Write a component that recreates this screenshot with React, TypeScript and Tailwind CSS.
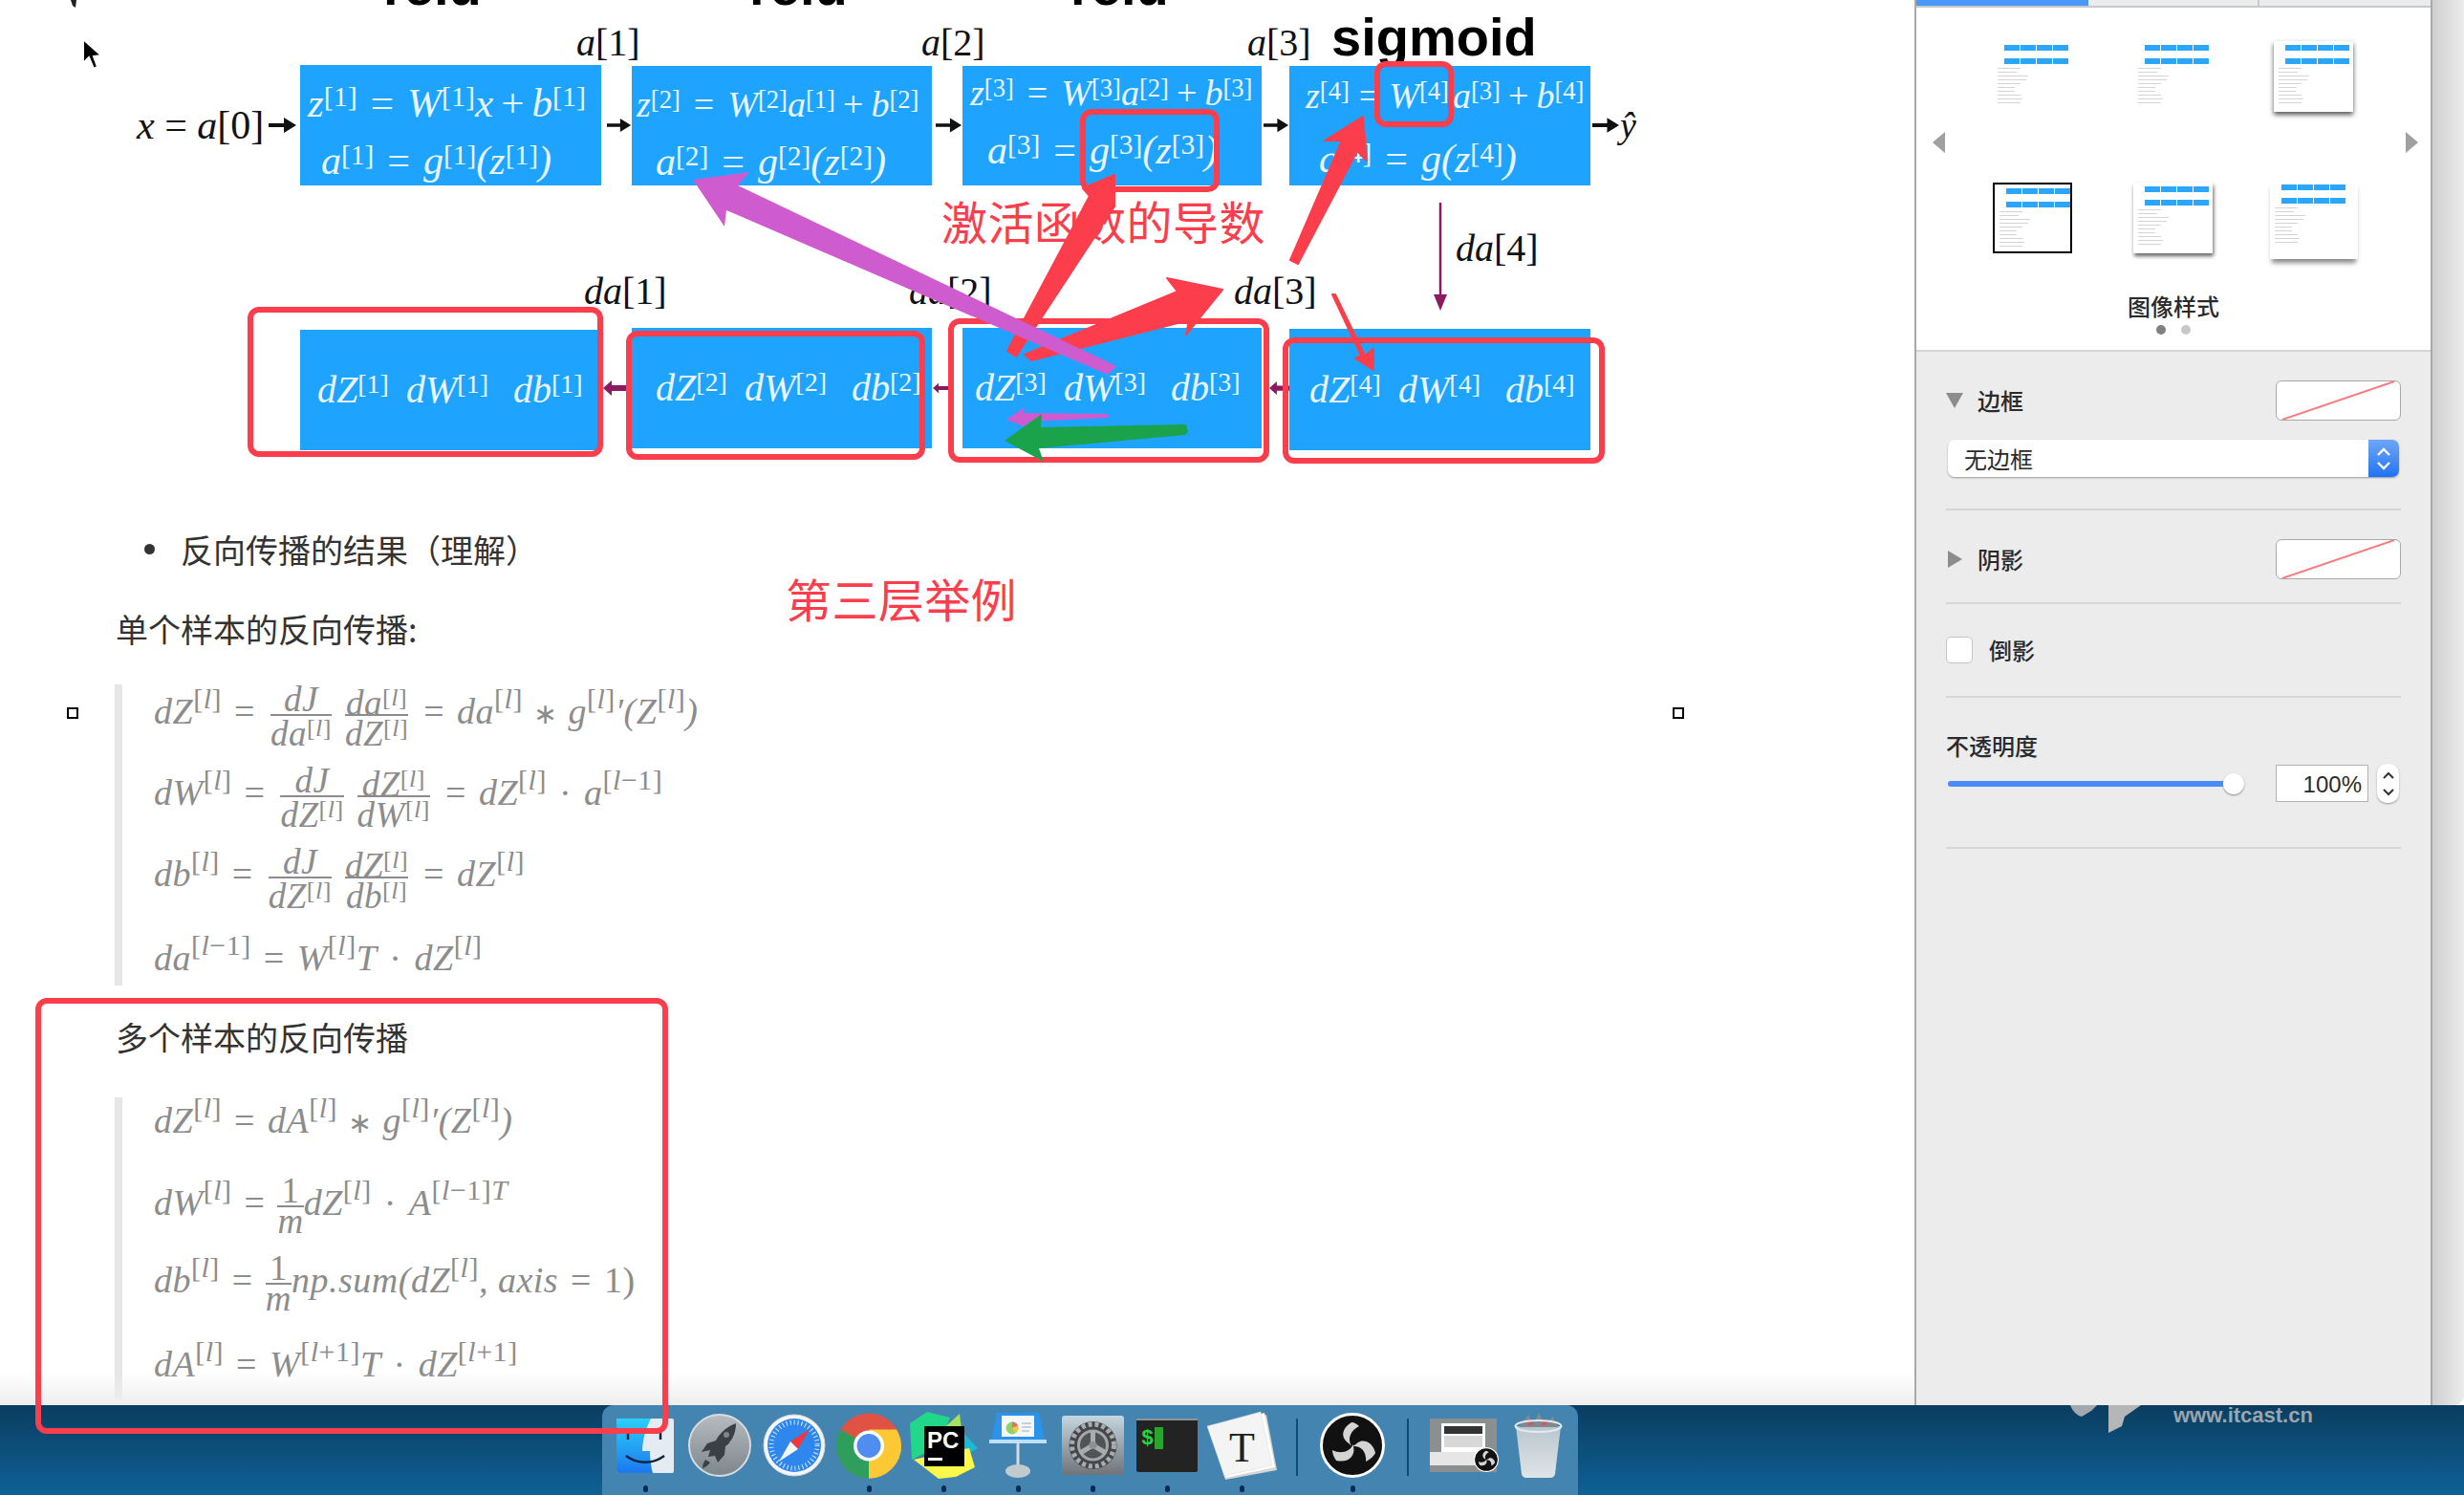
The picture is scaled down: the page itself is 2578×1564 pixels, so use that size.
import type { ReactNode } from "react";

const serif = "font-['Liberation_Serif',serif]";
const cjk = "font-['Noto_Sans_CJK_SC','Noto_Sans',sans-serif]";

function BoxSup({ children }: { children: ReactNode }) {
  return <span className="align-[0.35em] text-[0.7em] leading-none not-italic">[{children}]</span>;
}

function Op({ children, wide }: { children: ReactNode; wide?: boolean }) {
  return <span className={wide ? "mx-[14px] not-italic" : "mx-[8px] not-italic"}>{children}</span>;
}

function BlueBox({ className, children }: { className: string; children: ReactNode }) {
  return (
    <div className={`bg-[#1ea4ff] text-[#eaf6ff] italic text-[38px] leading-[40px] whitespace-nowrap shrink-0 ${serif} ${className}`}>
      {children}
    </div>
  );
}

function BlackArrow({ className }: { className: string }) {
  return (
    <svg viewBox="0 0 30 18" className={`h-[18px] shrink-0 ${className}`}>
      <path d="M0 7h16V1l13 8-13 8v-6H0z" fill="#111" />
    </svg>
  );
}

function PurpleLeft({ className }: { className: string }) {
  return (
    <svg viewBox="0 0 24 16" className={`h-[16px] shrink-0 ${className}`}>
      <path d="M0 8 9 0v5h15v6H9v5z" fill="#8b1a62" />
    </svg>
  );
}

function Trio({ n }: { n: number }) {
  return (
    <div className="flex items-baseline text-[40px]">
      <span className="w-[93px]">dZ<BoxSup>{n}</BoxSup></span>
      <span className="w-[112px]">dW<BoxSup>{n}</BoxSup></span>
      <span>db<BoxSup>{n}</BoxSup></span>
    </div>
  );
}

function Lab({ className, children }: { className: string; children: ReactNode }) {
  return <div className={`absolute text-[40px] leading-none text-[#111] whitespace-nowrap ${serif} ${className}`}>{children}</div>;
}

function Head({ className, children }: { className: string; children: ReactNode }) {
  return (
    <div className={`absolute text-[56px] leading-none font-bold text-black font-['Liberation_Sans',sans-serif] ${className}`}>
      {children}
    </div>
  );
}

function L() {
  return <span className="align-[16px] text-[30px] leading-none not-italic">[<i>l</i>]</span>;
}

function Sp({ children }: { children: ReactNode }) {
  return <span className="align-[16px] text-[30px] leading-none not-italic">[{children}]</span>;
}

function Frac({ num, den, className }: { num: ReactNode; den: ReactNode; className: string }) {
  return (
    <span className={`inline-flex flex-col items-center align-middle text-[37px] leading-[30px] ${className}`}>
      <span className="h-[30px] whitespace-nowrap">{num}</span>
      <span className="h-[2px] w-full bg-[#8c8c8c]" />
      <span className="h-[30px] whitespace-nowrap">{den}</span>
    </span>
  );
}

function SmallL() {
  return <span className="align-[10px] text-[26px] leading-none not-italic">[<i>l</i>]</span>;
}

function Eq({ children }: { children: ReactNode }) {
  return <div className="flex h-[85px] items-center whitespace-nowrap"><span>{children}</span></div>;
}

function Quote({ className, inner, children }: { className: string; inner: string; children: ReactNode }) {
  return (
    <div className={`flow-root ml-[120px] border-l-[8px] border-[#e6e6e6] pl-[33px] text-[#8c8c8c] italic text-[38px] tracking-[0.5px] ${serif} ${className}`}>
      <div className={inner}>{children}</div>
    </div>
  );
}

const eqOp = "mx-[13px] not-italic";
const star = "mx-[11px] text-[30px] not-italic";

function Handle({ className }: { className: string }) {
  return <div className={`absolute h-[12px] w-[12px] border-2 border-black bg-white ${className}`} />;
}

const thumbLines = ["w-[24px]", "w-[20px]", "w-[32px]", "w-[30px]", "w-[24px]", "w-[18px]", "w-[18px]", "w-[24px]", "w-[26px]", "w-[24px]"];

function Thumb({ className }: { className: string }) {
  return (
    <div className={`flex h-[74px] w-[83px] flex-col bg-white ${className}`}>
      <div className="ml-[12px] mt-[4px] flex gap-[1px]">
        {[0, 1, 2, 3].map((i) => <div key={i} className="h-[6px] w-[16px] bg-[#2ba6fb]" />)}
      </div>
      <div className="ml-[12px] mt-[8px] flex gap-[1px]">
        {[0, 1, 2, 3].map((i) => <div key={i} className="h-[6px] w-[16px] bg-[#2ba6fb]" />)}
      </div>
      <div className="ml-[5px] mt-[4px] flex flex-col gap-[3px]">
        {thumbLines.map((w, i) => <div key={i} className={`h-[1px] bg-[#d4d4d4] ${w}`} />)}
      </div>
    </div>
  );
}

function NoneSwatch() {
  return (
    <div className="h-[42px] w-[131px] overflow-hidden rounded-[6px] border border-[#a8a8a8] bg-white">
      <svg viewBox="0 0 131 42" className="h-full w-full">
        <line x1="4" y1="42" x2="127" y2="0" stroke="#fb7a80" strokeWidth="2" />
      </svg>
    </div>
  );
}

function Divider({ className }: { className: string }) {
  return <div className={`mx-[31px] h-[2px] bg-[#d6d6d6] ${className}`} />;
}

function DockSlot({ dot, children }: { dot?: boolean; children: ReactNode }) {
  return (
    <div className="flex h-full w-[78px] flex-col items-center">
      <div className="flex h-[84px] items-center justify-center">{children}</div>
      <div className={`h-[7px] w-[5px] rounded-full ${dot ? "bg-[#0a2a55]" : "bg-transparent"}`} />
    </div>
  );
}

function DockSep() {
  return (
    <div className="flex h-full w-[38px] items-center justify-center pb-[6px]">
      <div className="h-[60px] w-[2px] bg-[#0f4b78]" />
    </div>
  );
}

function Finder() {
  return (
    <svg viewBox="0 0 60 57" className="h-[57px] w-[60px]">
      <defs>
        <linearGradient id="fb" x1="0" y1="0" x2="0" y2="1"><stop offset="0" stopColor="#2bd0fa" /><stop offset="1" stopColor="#1c78ee" /></linearGradient>
      </defs>
      <rect width="60" height="57" rx="2" fill="#e4ebf3" />
      <path d="M2 0h34c-6 12-9 24-9 34h8c0 8 1 16 3 23H2a2 2 0 0 1-2-2V2a2 2 0 0 1 2-2z" fill="url(#fb)" />
      <path d="M12 13v9M46 13v9" stroke="#10233f" strokeWidth="2.5" />
      <path d="M10 39c12 9 28 9 40 0" stroke="#10233f" strokeWidth="2.5" fill="none" />
    </svg>
  );
}

function Rocket() {
  return (
    <svg viewBox="0 0 66 66" className="h-[66px] w-[66px]">
      <defs>
        <linearGradient id="rk" x1="0" y1="0" x2="0" y2="1"><stop offset="0" stopColor="#b6bcc0" /><stop offset="1" stopColor="#7d868b" /></linearGradient>
      </defs>
      <circle cx="33" cy="33" r="32" fill="url(#rk)" stroke="#d9dcde" strokeWidth="2" />
      <path d="M50 10c-9 3-17 10-21 18l-9 3-6 9 9-2-2 7 7-1 3 7 7-8 1-9c7-5 11-14 11-24z" fill="#3b4046" />
      <path d="M18 48c-2 3-3 6-3 9 3-1 6-3 8-6z" fill="#3b4046" />
      <circle cx="40" cy="22" r="3" fill="#7d868b" />
    </svg>
  );
}

function Safari() {
  return (
    <svg viewBox="0 0 66 66" className="h-[66px] w-[66px]">
      <circle cx="33" cy="33" r="32" fill="#f4f6f8" stroke="#d4d7da" />
      <circle cx="33" cy="33" r="28" fill="#2f86ec" />
      <circle cx="33" cy="33" r="24" fill="none" stroke="#d8ebff" strokeWidth="5" strokeDasharray="1 3" />
      <path d="M49 16 29 29l8 8z" fill="#f0383c" />
      <path d="M17 50 37 37l-8-8z" fill="#f4f6f8" />
    </svg>
  );
}

function Chrome() {
  return (
    <svg viewBox="0 0 68 68" className="h-[69px] w-[68px]">
      <circle cx="34" cy="34" r="34" fill="#e05243" />
      <path d="M34 34 4.5 17A34 34 0 0 0 34 68z" fill="#2f9d5b" />
      <path d="M34 34h34a34 34 0 0 1-34 34z" fill="#fcc934" />
      <path d="M34 17h29a34 34 0 0 1 5 17 34 34 0 0 1-34 34l16-28z" fill="#fcc934" />
      <circle cx="34" cy="34" r="16" fill="#fff" />
      <circle cx="34" cy="34" r="12.5" fill="#4f8df0" />
    </svg>
  );
}

function PyCharm() {
  return (
    <svg viewBox="0 0 71 70" className="h-[70px] w-[71px]">
      <path d="M18 0 42 6 30 36 2 50 0 12z" fill="#21d789" />
      <path d="M52 2 56 34 30 22z" fill="#a8e05f" />
      <path d="M56 22 71 38 58 46z" fill="#1bb9d8" />
      <path d="M4 50 30 70 48 68 68 58 62 38 30 44z" fill="#fcf84a" />
      <rect x="15" y="15" width="42" height="42" fill="#000" />
      <text x="18" y="38" fontSize="24" fontWeight="700" fill="#fff" fontFamily="Liberation Sans, sans-serif">PC</text>
      <rect x="19" y="48" width="15" height="3" fill="#fff" />
    </svg>
  );
}

function Keynote() {
  return (
    <svg viewBox="0 0 60 68" className="h-[68px] w-[60px]">
      <path d="M8 0h44l6 28H2z" fill="#2b93ea" />
      <rect x="13" y="3" width="34" height="22" fill="#f5f8fb" />
      <circle cx="24" cy="16" r="6.5" fill="#8fd26a" />
      <path d="M24 16V9.5a6.5 6.5 0 0 1 6 4z" fill="#ef6a6a" />
      <path d="M24 16l6-2.5a6.5 6.5 0 0 1-3 8z" fill="#f3c64b" />
      <path d="M34 11h10M34 15h10M34 19h8" stroke="#b9c4cf" strokeWidth="1.5" />
      <rect y="28" width="60" height="4" fill="#bfe0fb" />
      <rect x="28.5" y="32" width="3" height="26" fill="#d6dbe0" />
      <ellipse cx="30" cy="61" rx="13" ry="7" fill="#c2c9cf" />
    </svg>
  );
}

function SysPrefs() {
  return (
    <svg viewBox="0 0 65 62" className="h-[62px] w-[65px]">
      <defs>
        <linearGradient id="sp" x1="0" y1="0" x2="0" y2="1"><stop offset="0" stopColor="#c4d6df" /><stop offset="1" stopColor="#6f7479" /></linearGradient>
      </defs>
      <rect width="65" height="62" rx="3" fill="url(#sp)" />
      <circle cx="32.5" cy="31" r="25" fill="#45484b" />
      <circle cx="32.5" cy="31" r="22" fill="none" stroke="#a9adb0" strokeWidth="5" strokeDasharray="4 3" />
      <circle cx="32.5" cy="31" r="15" fill="#505457" stroke="#a3a7aa" strokeWidth="3" />
      <path d="M32.5 31V16M32.5 31 19 39M32.5 31 46 39" stroke="#a9adb0" strokeWidth="5" />
      <circle cx="32.5" cy="31" r="4" fill="#8d9194" />
    </svg>
  );
}

function TerminalIcon() {
  return (
    <svg viewBox="0 0 64 56" className="h-[56px] w-[64px]">
      <rect width="64" height="56" rx="2" fill="#232323" />
      <rect width="64" height="2" fill="#8e9498" />
      <text x="5" y="27" fontSize="22" fontWeight="700" fill="#27d43f" fontFamily="Liberation Mono, monospace">$</text>
      <rect x="19" y="9" width="9" height="23" fill="#2ba32f" />
    </svg>
  );
}

function Typora() {
  return (
    <svg viewBox="0 0 73 72" className="h-[72px] w-[73px]">
      <path d="M4 22 62 4l11 58-54 10z" fill="#d6d6d6" />
      <path d="M2 19 60 2l11 57-52 11z" fill="#fff" />
      <path d="M0 16 56 1l12 56-50 11z" fill="#f4f4f4" stroke="#ddd" strokeWidth="0.5" />
      <text x="23" y="53" fontSize="44" fill="#222" fontFamily="Liberation Serif, serif">T</text>
    </svg>
  );
}

function Obs({ size }: { size: string }) {
  return (
    <svg viewBox="0 0 68 68" className={size}>
      <circle cx="34" cy="34" r="32.5" fill="#111" stroke="#fff" strokeWidth="3" />
      <path d="M33 10c-8 5-11 12-7 18 2 3 5 4 7 7-5-9 0-17 8-21-2-2-5-4-8-4z" fill="#d4d4d4" />
      <path d="M58 42c-2-9-9-14-16-12-3 1-5 4-8 5 10-1 15 7 14 16 4-2 8-5 10-9z" fill="#d4d4d4" />
      <path d="M17 50c9 2 16-1 18-8 1-3 0-6 0-9-5 9-14 10-22 6 0 4 2 8 4 11z" fill="#d4d4d4" />
    </svg>
  );
}

function PreviewWindow() {
  return (
    <div className="relative h-[56px] w-[70px] bg-[#8b8f92]">
      <div className="mx-[12px] mt-[5px] h-[30px] bg-white p-[3px]">
        <div className="h-[8px] bg-[#333]" />
        <div className="mt-[2px] h-[12px] bg-[#d8d8d8]" />
      </div>
      <div className="h-[14px] bg-[#e6e6e6]" />
      <div className="absolute -bottom-[2px] -right-[2px]"><Obs size="h-[30px] w-[26px]" /></div>
    </div>
  );
}

function Trash() {
  return (
    <svg viewBox="0 0 53 68" className="h-[68px] w-[53px]">
      <defs>
        <linearGradient id="tr" x1="0" y1="0" x2="0" y2="1"><stop offset="0" stopColor="#b9c6ce" /><stop offset="1" stopColor="#dfe5e8" /></linearGradient>
      </defs>
      <path d="M3 14 9 64q1 4 5 4h25q4 0 5-4l6-50z" fill="url(#tr)" />
      <path d="M6 15 16 2l5 10 6-12 6 12 9-8 5 11z" fill="#7f8b93" />
      <path d="M14 13l5-6 2 6zM29 13l4-7 3 7z" fill="#d05a5a" />
      <ellipse cx="26.5" cy="14" rx="24" ry="6" fill="none" stroke="#e6eaec" strokeWidth="2" />
    </svg>
  );
}

function Overlay() {
  const red = "#fc3d4c";
  const boxes = [
    [259, 321, 372, 157],
    [655, 346, 313, 135],
    [992, 333, 336, 151],
    [1342, 353, 337, 132],
    [1130, 114, 146, 87],
    [1438, 64, 83, 69],
    [37, 1044, 662, 456],
  ];
  return (
    <svg viewBox="0 0 2578 1564" className="pointer-events-none absolute inset-0 h-full w-full">
      <path d="M1507 212V312" stroke="#8b1a62" strokeWidth="2.5" />
      <path d="M1500 308h14l-7 17z" fill="#8b1a62" />
      {boxes.map(([x, y, w, h], i) => (
        <rect key={i} x={x + 3} y={y + 3} width={w - 6} height={h - 6} rx="9" fill="none" stroke={red} strokeWidth="6" />
      ))}
      <g fill={red} stroke={red} strokeWidth="2" strokeLinejoin="round">
        <polygon points="1054,367 1140,205 1133,197 1166,183 1166,216 1063,373" />
        <polygon points="1350,272 1404,147 1386,147 1426,122 1430,168 1420,158 1358,276" />
        <polygon points="1072,371 1232,305 1221,291 1279,303 1241,350 1244,335 1079,377" />
        <polygon points="1394,308 1397,308 1428,372 1437,365 1437,387 1418,375 1424,372" />
      </g>
      <polygon points="725,188 784,180 772,194 1168,383 1159,392 760,220 758,237" fill="#cf5ccf" />
      <polygon points="1053,439 1072,426 1070,432 1159,433 1159,437 1076,441 1076,448" fill="#cf5ccf" />
      <polygon points="1051,461 1090,433 1089,447 1241,444 1243,452 1240,455 1087,469 1092,483" fill="#1aa34a" />
      <polygon points="87,41 87,66 93,60 98,72 102,70 98,59 106,58" fill="#000" stroke="#fff" strokeWidth="2" />
      <polygon points="74,0 80,0 79,8 76,6" fill="#222" />
    </svg>
  );
}

export default function App() {
  return (
    <div className={`relative flex h-[1564px] w-[2578px] flex-col overflow-hidden bg-white ${cjk}`}>
      <div className="flex h-[1470px] shrink-0">
        <div className="relative w-[2003px] shrink-0 overflow-hidden bg-white">
          <Head className="left-[401px] -top-[42px]">relu</Head>
          <Head className="left-[784px] -top-[42px]">relu</Head>
          <Head className="left-[1120px] -top-[42px]">relu</Head>
          <Head className="left-[1393px] top-[11px]">sigmoid</Head>
          <Lab className="left-[603px] top-[25px]"><i>a</i>[1]</Lab>
          <Lab className="left-[964px] top-[25px]"><i>a</i>[2]</Lab>
          <Lab className="left-[1305px] top-[25px]"><i>a</i>[3]</Lab>
          <Lab className="left-[611px] top-[285px]"><i>da</i>[1]</Lab>
          <Lab className="left-[951px] top-[285px]"><i>da</i>[2]</Lab>
          <Lab className="left-[1291px] top-[285px]"><i>da</i>[3]</Lab>
          <Lab className="left-[1523px] top-[240px]"><i>da</i>[4]</Lab>

          <div className="flex items-center pl-[143px] pt-[68px]">
            <div className={`w-[138px] shrink-0 whitespace-nowrap text-[42px] text-[#111] ${serif}`}><i>x</i> = <i>a</i>[0]</div>
            <div className="flex w-[33px] shrink-0"><BlackArrow className="w-[30px]" /></div>
            <BlueBox className="h-[126px] w-[315px] pl-[8px] pt-[18px]">
              <div className="text-[43px]">z<BoxSup>1</BoxSup><Op wide>=</Op>W<BoxSup>1</BoxSup>x<Op>+</Op>b<BoxSup>1</BoxSup></div>
              <div className="ml-[14px] mt-[20px] text-[42px]">a<BoxSup>1</BoxSup><Op wide>=</Op>g<BoxSup>1</BoxSup>(z<BoxSup>1</BoxSup>)</div>
            </BlueBox>
            <div className="flex w-[32px] shrink-0 pl-[6px]"><BlackArrow className="w-[26px]" /></div>
            <BlueBox className="h-[125px] w-[314px] pl-[5px] pt-[20px]">
              <div>z<BoxSup>2</BoxSup><Op wide>=</Op>W<BoxSup>2</BoxSup>a<BoxSup>1</BoxSup><Op>+</Op>b<BoxSup>2</BoxSup></div>
              <div className="ml-[20px] mt-[20px] text-[42px]">a<BoxSup>2</BoxSup><Op wide>=</Op>g<BoxSup>2</BoxSup>(z<BoxSup>2</BoxSup>)</div>
            </BlueBox>
            <div className="flex w-[32px] shrink-0 pl-[4px]"><BlackArrow className="w-[28px]" /></div>
            <BlueBox className="h-[125px] w-[313px] pl-[8px] pt-[8px]">
              <div>z<BoxSup>3</BoxSup><Op wide>=</Op>W<BoxSup>3</BoxSup>a<BoxSup>2</BoxSup><Op>+</Op>b<BoxSup>3</BoxSup></div>
              <div className="ml-[18px] mt-[20px] text-[42px]">a<BoxSup>3</BoxSup><Op wide>=</Op>g<BoxSup>3</BoxSup>(z<BoxSup>3</BoxSup>)</div>
            </BlueBox>
            <div className="flex w-[29px] shrink-0 pl-[2px]"><BlackArrow className="w-[27px]" /></div>
            <BlueBox className="h-[125px] w-[315px] pl-[17px] pt-[11px]">
              <div>z<BoxSup>4</BoxSup><span className="mx-[10px] not-italic">=</span>W<BoxSup>4</BoxSup><span className="ml-[4px]">a</span><BoxSup>3</BoxSup><Op>+</Op>b<BoxSup>4</BoxSup></div>
              <div className="ml-[14px] mt-[26px] text-[42px]">a<BoxSup>4</BoxSup><Op wide>=</Op>g(z<BoxSup>4</BoxSup>)</div>
            </BlueBox>
            <div className="ml-[2px] flex shrink-0 items-center"><BlackArrow className="w-[29px]" /><span className={`text-[38px] italic text-[#111] ${serif}`}>ŷ</span></div>
          </div>

          <div className="relative flex items-start pl-[314px] pt-[149px]">
            <BlueBox className="mt-[2px] flex h-[126px] w-[311px] items-center pl-[18px]"><Trio n={1} /></BlueBox>
            <div className="flex h-[126px] w-[36px] shrink-0 items-center pl-[6px]"><PurpleLeft className="w-[24px]" /></div>
            <BlueBox className="flex h-[126px] w-[314px] items-center pl-[25px]"><Trio n={2} /></BlueBox>
            <div className="flex h-[126px] w-[32px] shrink-0 items-center pl-[1px]"><PurpleLeft className="w-[16px]" /></div>
            <BlueBox className="flex h-[126px] w-[313px] items-center pl-[13px]"><Trio n={3} /></BlueBox>
            <div className="flex h-[126px] w-[29px] shrink-0 items-center pl-[8px]"><PurpleLeft className="w-[21px]" /></div>
            <BlueBox className="mt-[1px] flex h-[127px] w-[315px] items-center pl-[21px]"><Trio n={4} /></BlueBox>
          </div>

          <div className="absolute left-[985px] top-[202px] text-[48px] leading-[56px] tracking-[0.4px] text-[#fc3d4c] whitespace-nowrap">激活函数的导数</div>
          <div className="absolute left-[822px] top-[597px] text-[48px] leading-[56px] tracking-[0.4px] text-[#fc3d4c] whitespace-nowrap">第三层举例</div>
          <Handle className="left-[70px] top-[740px]" />
          <Handle className="left-[1750px] top-[740px]" />

          <div className="ml-[151px] mt-[83px] flex h-[40px] items-center text-[34px] text-[#333]">
            <span className="mr-[27px] h-[11px] w-[11px] rounded-full bg-[#333]" />
            <span>反向传播的结果（理解）</span>
          </div>
          <div className="ml-[121px] mt-[44px] h-[40px] text-[34px] leading-[40px] text-[#333]">单个样本的反向传播:</div>

          <Quote className="mt-[38px] h-[315px]" inner="-mt-[11px]">
            <Eq>
              dZ<L /><span className={eqOp}>=</span>
              <Frac className="mr-[8px] px-[3px]" num="dJ" den={<>da<SmallL /></>} />
              <Frac className="px-[3px]" num={<>da<SmallL /></>} den={<>dZ<SmallL /></>} />
              <span className={eqOp}>=</span>da<L /><span className={star}>∗</span>g<L />′(Z<L />)
            </Eq>
            <Eq>
              dW<L /><span className={eqOp}>=</span>
              <Frac className="mr-[8px] px-[3px]" num="dJ" den={<>dZ<SmallL /></>} />
              <Frac className="px-[3px]" num={<>dZ<SmallL /></>} den={<>dW<SmallL /></>} />
              <span className={eqOp}>=</span>dZ<L /><span className={eqOp}>·</span>a<Sp><i>l</i>−1</Sp>
            </Eq>
            <Eq>
              db<L /><span className={eqOp}>=</span>
              <Frac className="mr-[8px] px-[3px]" num="dJ" den={<>dZ<SmallL /></>} />
              <Frac className="px-[3px]" num={<>dZ<SmallL /></>} den={<>db<SmallL /></>} />
              <span className={eqOp}>=</span>dZ<L />
            </Eq>
            <Eq>
              da<Sp><i>l</i>−1</Sp><span className={eqOp}>=</span>W<L />T<span className={eqOp}>·</span>dZ<L />
            </Eq>
          </Quote>

          <div className="ml-[121px] mt-[34px] h-[40px] text-[34px] leading-[40px] text-[#333]">多个样本的反向传播</div>

          <Quote className="mt-[43px] h-[316px]" inner="-mt-[18px]">
            <Eq>
              dZ<L /><span className={eqOp}>=</span>dA<L /><span className={star}>∗</span>g<L />′(Z<L />)
            </Eq>
            <Eq>
              dW<L /><span className={eqOp}>=</span>
              <Frac className="" num={<span className="not-italic">1</span>} den="m" />
              dZ<L /><span className={eqOp}>·</span>A<Sp><i>l</i>−1</Sp><span className="align-[16px] text-[30px]">T</span>
            </Eq>
            <Eq>
              db<L /><span className={eqOp}>=</span>
              <Frac className="" num={<span className="not-italic">1</span>} den="m" />
              np.sum(dZ<L />, axis<span className={eqOp}>=</span><span className="not-italic">1)</span>
            </Eq>
            <Eq>
              dA<L /><span className={eqOp}>=</span>W<Sp><i>l</i>+1</Sp>T<span className={eqOp}>·</span>dZ<Sp><i>l</i>+1</Sp>
            </Eq>
          </Quote>

          <div className="absolute inset-x-0 bottom-0 h-[34px] bg-gradient-to-b from-[#ffffff00] to-[#eeeeee]" />
        </div>

        <div className="w-[542px] shrink-0 border-x-2 border-x-[#a9a9a9] bg-[#ececec] text-[#2a2a2a]">
          <div className="flex h-[8px] border-b-2 border-[#c6c9cd]">
            <div className="w-[180px] bg-[#4a98f7]" />
            <div className="w-[179px] border-r-2 border-[#c6c9cd]" />
          </div>
          <div className="flex h-[360px] flex-col border-b-2 border-[#d5d5d5] bg-white">
            <div className="flex items-start pt-[35px]">
              <svg viewBox="0 0 13 22" className="ml-[17px] mt-[95px] h-[22px] w-[13px] shrink-0"><path d="M13 0v22L0 11z" fill="#a0a0a0" /></svg>
              <div className="ml-[18px] grid w-[441px] grid-cols-3">
                <div className="flex h-[148px] justify-center"><Thumb className="" /></div>
                <div className="flex h-[148px] justify-center"><Thumb className="" /></div>
                <div className="flex h-[148px] justify-center"><Thumb className="shadow-[0_3px_5px_#555]" /></div>
                <div className="flex h-[100px] justify-center"><Thumb className="border-2 border-black" /></div>
                <div className="flex h-[100px] justify-center"><Thumb className="shadow-[1px_3px_4px_#666]" /></div>
                <div className="flex h-[100px] justify-center"><Thumb className="-mt-[2px] h-[82px] w-[92px] shadow-[0_6px_5px_-2px_#888]" /></div>
              </div>
              <svg viewBox="0 0 13 22" className="ml-[23px] mt-[95px] h-[22px] w-[13px] shrink-0"><path d="M0 0v22l13-11z" fill="#a0a0a0" /></svg>
            </div>
            <div className="mt-[14px] text-center text-[24px] font-medium leading-[30px]">图像样式</div>
            <div className="mt-[5px] flex justify-center gap-[16px]">
              <div className="h-[10px] w-[10px] rounded-full bg-[#808080]" />
              <div className="h-[10px] w-[10px] rounded-full bg-[#c8c8c8]" />
            </div>
          </div>

          <div className="mx-[31px] mt-[30px] flex h-[42px] items-center justify-between">
            <div className="flex items-center">
              <svg viewBox="0 0 18 16" className="h-[16px] w-[18px]"><path d="M0 0h18L9 16z" fill="#8c8c8c" /></svg>
              <span className="ml-[15px] text-[24px] font-medium">边框</span>
            </div>
            <NoneSwatch />
          </div>
          <div className="mx-[33px] mt-[20px] flex h-[39px] items-stretch overflow-hidden rounded-[7px] bg-white shadow-[0_1px_2px_#999]">
            <div className="flex-1 pl-[17px] text-[24px] leading-[39px]">无边框</div>
            <div className="flex w-[32px] items-center justify-center bg-gradient-to-b from-[#6ea6f8] to-[#1d72f5]">
              <svg viewBox="0 0 16 26" className="h-[26px] w-[16px]"><path d="M2 9l6-6 6 6M2 17l6 6 6-6" fill="none" stroke="#fff" strokeWidth="2.4" /></svg>
            </div>
          </div>
          <Divider className="mt-[33px]" />

          <div className="mx-[31px] mt-[30px] flex h-[42px] items-center justify-between">
            <div className="flex items-center">
              <svg viewBox="0 0 15 18" className="ml-[2px] h-[18px] w-[15px]"><path d="M0 0v18l15-9z" fill="#8c8c8c" /></svg>
              <span className="ml-[16px] text-[24px] font-medium">阴影</span>
            </div>
            <NoneSwatch />
          </div>
          <Divider className="mt-[24px]" />

          <div className="mx-[31px] mt-[34px] flex h-[28px] items-center">
            <div className="h-[28px] w-[28px] rounded-[5px] border border-[#c4c4c4] bg-white" />
            <span className="ml-[17px] text-[24px] font-medium">倒影</span>
          </div>
          <Divider className="mt-[34px]" />

          <div className="ml-[31px] mt-[35px] text-[24px] font-medium leading-[30px]">不透明度</div>
          <div className="mx-[31px] mt-[4px] flex h-[41px] items-center">
            <div className="flex w-[312px] items-center pl-[2px]">
              <div className="h-[6px] w-[292px] rounded-full bg-[#4a8cf6]" />
              <div className="-ml-[3px] h-[22px] w-[22px] rounded-full bg-white shadow-[0_1px_2px_#888]" />
            </div>
            <div className="ml-[33px] h-[39px] w-[97px] border border-[#b2b2b2] bg-white pr-[6px] text-right font-['Liberation_Sans',sans-serif] text-[24px] leading-[40px]">100%</div>
            <div className="ml-[9px] flex h-[41px] w-[23px] items-center justify-center rounded-[10px] bg-white shadow-[0_1px_2px_#999]">
              <svg viewBox="0 0 14 30" className="h-[30px] w-[14px]"><path d="M2 9l5-5 5 5M2 21l5 5 5-5" fill="none" stroke="#333" strokeWidth="2" /></svg>
            </div>
          </div>
          <Divider className="mt-[46px]" />
        </div>

        <div className="w-[33px] shrink-0 rounded-br-[10px] bg-gradient-to-r from-[#cfcfcf] to-[#ececec]" />
      </div>

      <div className="flex h-[94px] shrink-0 bg-gradient-to-b from-[#0a3d60] to-[#0e6197] pl-[630px]">
        <div className="flex h-full w-[1021px] rounded-t-[12px] bg-[#4484b0] pl-[6px]">
          <DockSlot dot><Finder /></DockSlot>
          <DockSlot><Rocket /></DockSlot>
          <DockSlot><Safari /></DockSlot>
          <DockSlot dot><Chrome /></DockSlot>
          <DockSlot dot><PyCharm /></DockSlot>
          <DockSlot dot><Keynote /></DockSlot>
          <DockSlot dot><SysPrefs /></DockSlot>
          <DockSlot dot><TerminalIcon /></DockSlot>
          <DockSlot dot><Typora /></DockSlot>
          <DockSep />
          <DockSlot dot><Obs size="h-[68px] w-[68px]" /></DockSlot>
          <DockSep />
          <DockSlot><PreviewWindow /></DockSlot>
          <DockSlot><Trash /></DockSlot>
        </div>
        <div className="ml-[515px] flex h-[28px] items-start">
          <svg viewBox="0 0 75 29" className="h-[29px] w-[75px]">
            <path d="M0 0h28l-6 6-10 6Q4 10 0 0z" fill="#a4a9ad" />
            <path d="M40 0h34L57 12l-3 10-14 7z" fill="#b4b6b8" />
          </svg>
          <div className="ml-[33px] font-['Liberation_Sans',sans-serif] text-[22px] font-bold leading-[22px] text-[#9aa5ad]">www.itcast.cn</div>
        </div>
      </div>

      <Overlay />
    </div>
  );
}
